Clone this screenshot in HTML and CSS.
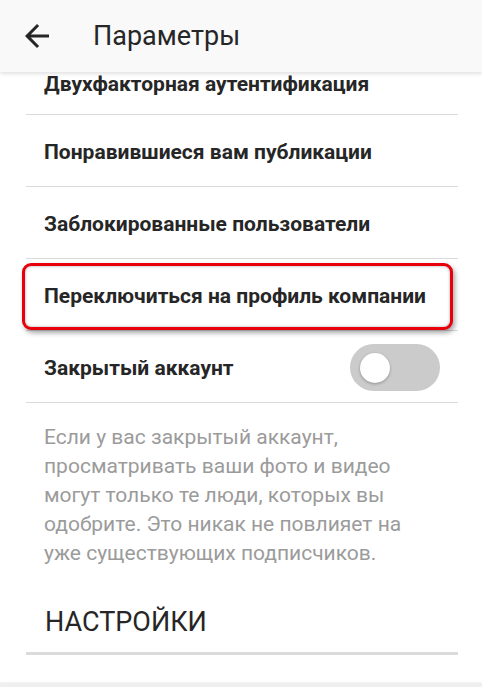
FILE: index.html
```html
<!DOCTYPE html>
<html lang="ru">
<head>
    <meta charset="UTF-8">
    <meta name="viewport" content="width=device-width, initial-scale=1.0">
    <title>Параметры</title>
    <link rel="stylesheet" href="styles.css">
</head>
<body>
    <div class="screen">
        <header class="topbar">
            <svg class="back" viewBox="0 0 24 24" width="36" height="36">
                <path d="M20 11H7.83l5.59-5.59L12 4l-8 8 8 8 1.41-1.41L7.83 13H20v-2z" fill="#262626"/>
            </svg>
            <h1>Параметры</h1>
        </header>

        <div class="list">
            <div class="row row-cut">Двухфакторная аутентификация</div>
            <div class="row">Понравившиеся вам публикации</div>
            <div class="row">Заблокированные пользователи</div>
            <div class="row marked">
                <span class="mark"></span>
                <span class="label">Переключиться на профиль компании</span>
            </div>
            <div class="row">
                <span>Закрытый аккаунт</span>
                <span class="toggle"><span class="knob"></span></span>
            </div>
            <p class="hint">Если у вас закрытый аккаунт, просматривать ваши фото и видео могут только те люди, которых вы одобрите. Это никак не повлияет на уже существующих подписчиков.</p>
            <h2 class="section">НАСТРОЙКИ</h2>
            <div class="row row-next">Сохранять оригинальные фото</div>
        </div>

        <div class="bottombar"></div>
    </div>
</body>
</html>
```

FILE: styles.css
```css
* {
    box-sizing: border-box;
}

body {
    margin: 0;
    background: #fff;
    font-family: Roboto, "Noto Sans", sans-serif;
    color: #262626;
}

.screen {
    position: relative;
    width: 482px;
    height: 687px;
    overflow: hidden;
    background: #fff;
}

.topbar {
    position: relative;
    z-index: 2;
    height: 72px;
    display: flex;
    align-items: center;
    background: #f9f9f9;
    box-shadow: 0 2px 4px rgba(0, 0, 0, 0.12);
}

.back {
    margin-left: 19px;
}

.topbar h1 {
    margin: 0 0 0 38px;
    font-size: 27px;
    font-weight: 400;
    color: #262626;
}

.list {
    margin: 0 24px 0 26px;
}

.row {
    position: relative;
    height: 72px;
    display: flex;
    align-items: center;
    justify-content: space-between;
    padding: 2px 18px 0 18px;
    font-size: 21px;
    font-weight: 700;
    border-bottom: 1px solid #dbdbdb;
}

.row-cut {
    height: 43px;
    align-items: flex-start;
    padding-top: 0;
}

.marked .label {
    position: relative;
    z-index: 1;
}

.mark {
    position: absolute;
    left: -4px;
    right: 5px;
    top: 4px;
    bottom: 0;
    border: 3px solid #e8000b;
    border-radius: 9px;
    background: #fff;
    box-shadow: 2px 3px 5px rgba(0, 0, 0, 0.35), inset 0 0 3px rgba(0, 0, 0, 0.35);
}

.toggle {
    position: relative;
    width: 90px;
    height: 47px;
    border-radius: 24px;
    background: #cbcbcb;
    display: flex;
    align-items: center;
    padding-left: 10px;
}

.knob {
    width: 30px;
    height: 30px;
    border-radius: 50%;
    background: #fff;
    box-shadow: 0 1px 3px rgba(0, 0, 0, 0.3);
}

.hint {
    margin: 0;
    padding: 20px 18px 0 18px;
    font-size: 21px;
    line-height: 29px;
    color: #9b9b9b;
}

.section {
    margin: 0;
    padding: 38px 19px 14px 19px;
    font-size: 27px;
    line-height: 32px;
    font-weight: 400;
    border-bottom: 3px solid #dbdbdb;
}

.row-next {
    border-bottom: none;
    align-items: flex-start;
    padding-top: 27px;
}

.bottombar {
    position: absolute;
    left: 0;
    right: 0;
    bottom: 0;
    height: 4px;
    background: #efefef;
    box-shadow: 0 -1px 2px rgba(0, 0, 0, 0.06);
}
```
